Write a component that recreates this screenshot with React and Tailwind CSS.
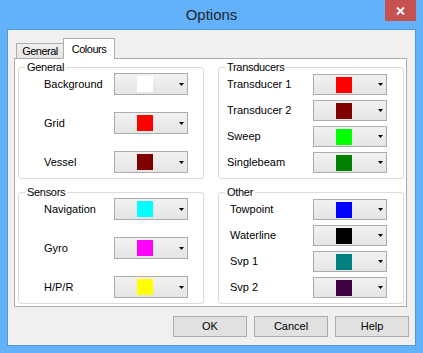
import React from 'react';

const general = [
  { label: 'Background', color: '#ffffff' },
  { label: 'Grid', color: '#ff0000' },
  { label: 'Vessel', color: '#800000' },
];
const sensors = [
  { label: 'Navigation', color: '#00ffff' },
  { label: 'Gyro', color: '#ff00ff' },
  { label: 'H/P/R', color: '#ffff00' },
];
const transducers = [
  { label: 'Transducer 1', color: '#ff0000' },
  { label: 'Transducer 2', color: '#800000' },
  { label: 'Sweep', color: '#00ff00' },
  { label: 'Singlebeam', color: '#008000' },
];
const other = [
  { label: 'Towpoint', color: '#0000ff' },
  { label: 'Waterline', color: '#000000' },
  { label: 'Svp 1', color: '#008080' },
  { label: 'Svp 2', color: '#3f003f' },
];

function ColourCombo({ color, tall }) {
  return (
    <div
      className={`flex items-center w-[74px] ${tall ? 'h-[22px]' : 'h-[21px]'} border border-[#acacac] bg-gradient-to-b from-[#f2f2f2] to-[#e5e5e5] pl-[22px] pr-[3px]`}
    >
      <span className="w-[16px] h-[16px]" style={{ backgroundColor: color }} />
      <span className="flex-1" />
      <svg width="5" height="3" viewBox="0 0 5 3">
        <polygon points="0,0 5,0 2.5,3" fill="#000" />
      </svg>
    </div>
  );
}

function Group({ title, children }) {
  return (
    <fieldset className="w-[186px] border border-[#dcdcdc] rounded-[3px]">
      <legend className="ml-[6px] px-[2px] leading-[12px] tracking-[-0.3px] text-black">{title}</legend>
      {children}
    </fieldset>
  );
}

export default function App() {
  return (
    <div className="w-[423px] h-[353px] bg-[#63b1f8] flex flex-col px-[7px] pb-[7px] font-['Liberation_Sans',Arial,sans-serif] text-[11px] text-black select-none">
      {/* Title bar */}
      <div className="h-[29px] grid grid-cols-[1fr_auto_1fr] items-start -mx-[7px]">
        <div />
        <div className="pt-[6px] text-[15px] leading-[18px] text-[#1f2630]">Options</div>
        <div className="flex justify-end pr-[7px]">
          <button type="button" className="w-[31px] h-[21px] bg-[#c75050] flex items-center justify-center">
            <svg width="9" height="8" viewBox="0 0 9 8">
              <path d="M1 0.5 L8 7.5 M8 0.5 L1 7.5" stroke="#fff" strokeWidth="2" />
            </svg>
          </button>
        </div>
      </div>

      {/* Client area */}
      <div className="flex-1 flex flex-col border border-[#4f97d8] bg-[#f0f0f0]">
        {/* Tabs */}
        <div className="h-[28px] flex items-end ml-[8px] tracking-[-0.5px]">
          <div className="w-[47px] h-[15px] border-t border-l border-[#acacac] bg-gradient-to-b from-[#f0f0f0] to-[#e5e5e5] flex items-center justify-center">
            General
          </div>
          <div className="relative z-10 -mb-[1px] w-[52px] h-[21px] border-t border-l border-r border-[#acacac] bg-white flex items-center justify-center">
            Colours
          </div>
        </div>

        {/* Tab panel */}
        <div className="ml-[6px] w-[393px] h-[249px] border border-[#acacac] bg-white pt-[2px] pl-[3px] flex gap-[14px]">
          <div className="flex flex-col gap-[7px]">
            <Group title="General">
              <div className="flex flex-col gap-[17px] pl-[25px] pb-[5px]">
                {general.map((r) => (
                  <div key={r.label} className="flex items-center">
                    <span className="w-[70px]">{r.label}</span>
                    <ColourCombo color={r.color} tall />
                  </div>
                ))}
              </div>
            </Group>
            <Group title="Sensors">
              <div className="flex flex-col gap-[17px] pl-[25px] pb-[5px]">
                {sensors.map((r) => (
                  <div key={r.label} className="flex items-center">
                    <span className="w-[70px]">{r.label}</span>
                    <ColourCombo color={r.color} tall />
                  </div>
                ))}
              </div>
            </Group>
          </div>
          <div className="flex flex-col gap-[7px]">
            <Group title="Transducers">
              <div className="flex flex-col gap-[5px] pl-[8px] pt-[1px] pb-[5px]">
                {transducers.map((r) => (
                  <div key={r.label} className="flex items-center">
                    <span className="w-[86px]">{r.label}</span>
                    <ColourCombo color={r.color} />
                  </div>
                ))}
              </div>
            </Group>
            <Group title="Other">
              <div className="flex flex-col gap-[5px] pl-[11px] pt-[1px] pb-[5px]">
                {other.map((r) => (
                  <div key={r.label} className="flex items-center">
                    <span className="w-[83px]">{r.label}</span>
                    <ColourCombo color={r.color} />
                  </div>
                ))}
              </div>
            </Group>
          </div>
        </div>

        {/* Buttons */}
        <div className="mt-[9px] flex justify-end gap-[7px] pr-[6px]">
          {['OK', 'Cancel', 'Help'].map((b) => (
            <button
              key={b}
              type="button"
              className="w-[74px] h-[21px] border border-[#adadad] bg-[#e1e1e1] text-[11px] text-black"
            >
              {b}
            </button>
          ))}
        </div>
      </div>
    </div>
  );
}
